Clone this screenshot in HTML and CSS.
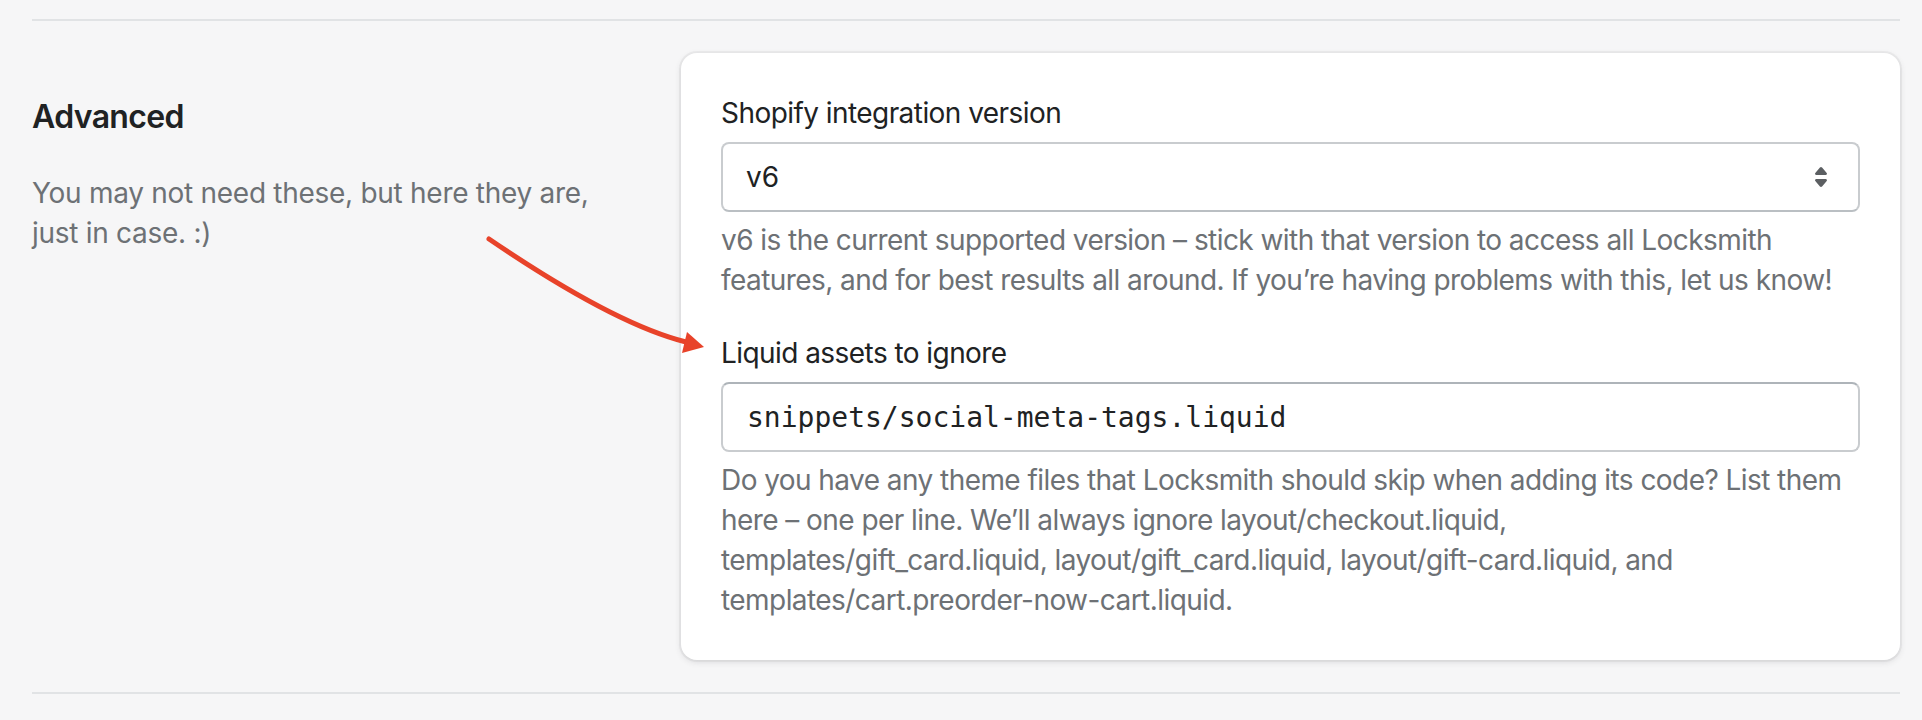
FILE: index.html
```html
<!DOCTYPE html>
<html lang="en">
<head>
<meta charset="utf-8">
<title>Advanced settings</title>
<link rel="stylesheet" href="styles.css">
</head>
<body>
<div class="page">
  <section class="section">
    <div class="annotation">
      <h2 class="heading">Advanced</h2>
      <p class="annotation-text">You may not need these, but here they are, just in case. :)</p>
    </div>
    <div class="card">
      <div class="field">
        <label class="label" for="version">Shopify integration version</label>
        <div class="select">
          <span class="select-value">v6</span>
          <svg class="select-icon" viewBox="0 0 20 20" width="40" height="40" aria-hidden="true">
            <path d="M7.676 9h4.648c.563 0 .879-.603.53-1.014l-2.323-2.746a.708.708 0 0 0-1.062 0l-2.324 2.746c-.347.411-.032 1.014.531 1.014Zm4.648 2h-4.648c-.563 0-.878.603-.53 1.014l2.323 2.746c.27.316.792.316 1.062 0l2.323-2.746c.349-.411.033-1.014-.53-1.014Z"/>
          </svg>
        </div>
        <p class="help">v6 is the current supported version – stick with that version to access all Locksmith features, and for best results all around. If you’re having problems with this, let us know!</p>
      </div>
      <div class="field field-gap">
        <label class="label" for="assets">Liquid assets to ignore</label>
        <div class="input">snippets/social-meta-tags.liquid</div>
        <p class="help">Do you have any theme files that Locksmith should skip when adding its code? List them here – one per line. We’ll always ignore layout/checkout.liquid,<br>templates/gift_card.liquid, layout/gift_card.liquid, layout/gift-card.liquid, and templates/cart.preorder-now-cart.liquid.</p>
      </div>
    </div>
  </section>
  <svg class="callout-arrow" viewBox="470 220 250 150" width="250" height="150" aria-hidden="true">
    <path d="M489 239 Q614 324 686 342" fill="none" stroke="#e8432a" stroke-width="5" stroke-linecap="round"/>
    <polygon points="687,332 682,353 704,347" fill="#e8432a"/>
  </svg>
</div>
</body>
</html>
```

FILE: styles.css
```css
* { box-sizing: border-box; }

html, body {
  margin: 0;
  background: #f6f6f7;
}

body {
  font-family: Inter, "Noto Sans", "Liberation Sans", sans-serif;
  color: #202223;
  width: 1922px;
  height: 720px;
  overflow: hidden;
}

.page {
  position: relative;
  padding: 19px 22px 0 32px;
}

.section {
  display: grid;
  grid-template-columns: 609px 1219px;
  column-gap: 40px;
  border-top: 2px solid #e1e3e5;
  border-bottom: 2px solid #e1e3e5;
  padding: 32px 0 32px;
}

.annotation {
  padding-top: 40px;
}

.heading {
  margin: 0;
  font-size: 32px;
  line-height: 48px;
  font-weight: 600;
  letter-spacing: -0.02em;
  color: #202223;
}

.annotation-text {
  margin: 32px 0 0;
  font-size: 28px;
  line-height: 40px;
  letter-spacing: -0.01em;
  color: #6d7175;
}

.card {
  background: #ffffff;
  border-radius: 16px;
  box-shadow: 0 0 0 2px rgba(63, 63, 68, 0.05), 0 2px 6px rgba(63, 63, 68, 0.15);
  padding: 40px;
}

.field {
  display: flex;
  flex-direction: column;
}

.field-gap {
  margin-top: 33px;
}

.label {
  font-size: 28px;
  line-height: 40px;
  letter-spacing: -0.02em;
  color: #202223;
  margin-bottom: 9px;
}

.select,
.input {
  height: 70px;
  border: 2px solid #c9cccf;
  border-radius: 8px;
  display: flex;
  align-items: center;
  background: #fff;
}

.select {
  border-bottom-color: #babfc3;
  padding: 0 17px 0 23px;
  justify-content: space-between;
}

.select-value {
  font-size: 28px;
  color: #202223;
}

.select-icon {
  fill: #5c5f62;
}

.input {
  border-top-color: #aeb4b9;
  padding: 0 24px;
  font-family: "DejaVu Sans Mono", "Liberation Mono", monospace;
  font-size: 28px;
  color: #202223;
}

.help {
  margin: 8px 0 0;
  font-size: 28px;
  line-height: 40px;
  letter-spacing: -0.02em;
  color: #6d7175;
}

.callout-arrow {
  position: absolute;
  left: 470px;
  top: 220px;
  pointer-events: none;
}
```
